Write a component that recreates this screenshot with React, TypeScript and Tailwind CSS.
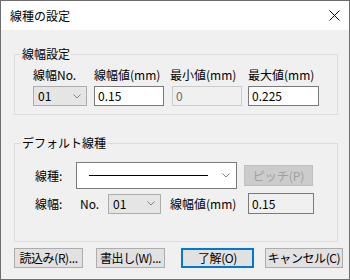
import React from "react";

const Chevron = () => (
  <svg width="8" height="5" viewBox="0 0 8 5" className="shrink-0">
    <polyline points="0.5,0.5 4,4 7.5,0.5" fill="none" stroke="#858585" strokeWidth="1" />
  </svg>
);

function NoCombo({ value, w }: { value: string; w: string }) {
  return (
    <div className={`${w} h-[20px] border border-[#adadad] bg-[#e5e5e5] flex items-center justify-between pl-[4px] pr-[5px]`}>
      <span>{value}</span>
      <Chevron />
    </div>
  );
}

function TextBox({ value, w, disabled }: { value: string; w: string; disabled?: boolean }) {
  return (
    <div
      className={`${w} h-[20px] border flex items-center pl-[3px] ${
        disabled ? "border-[#cccccc] bg-[#f0f0f0] text-[#6d6d6d]" : "border-[#7a7a7a] bg-white"
      }`}
    >
      {value}
    </div>
  );
}

function Btn({ label, w, ml, def }: { label: string; w: string; ml: string; def?: boolean }) {
  return (
    <div
      className={`${w} ${ml} h-[20px] flex items-center justify-center whitespace-nowrap tracking-[-0.4px] bg-[#e1e1e1] ${
        def ? "border-2 border-[#0078d7]" : "border border-[#adadad]"
      }`}
    >
      {label}
    </div>
  );
}

function Column({ label, ml, labelMl, children }: { label: string; ml: string; labelMl?: string; children: React.ReactNode }) {
  return (
    <div className={`flex flex-col ${ml}`}>
      <div className={`h-[14px] leading-[14px] whitespace-nowrap ${labelMl ?? ""}`}>{label}</div>
      <div className="mt-[4px]">{children}</div>
    </div>
  );
}

export default function App() {
  return (
    <div className="w-[350px] h-[280px] border border-[#6d6d6d] bg-[#f0f0f0] flex flex-col text-[12px] leading-none text-black font-['Noto_Sans_CJK_JP','Noto_Sans',sans-serif]">
      {/* タイトルバー */}
      <div className="h-[29px] bg-white flex items-center justify-between pl-[9px] pr-[9px]">
        <span>線種の設定</span>
        <svg width="11" height="11" viewBox="0 0 11 11">
          <path d="M0.5 0.5 L10.5 10.5 M10.5 0.5 L0.5 10.5" stroke="#000" strokeWidth="1" />
        </svg>
      </div>

      <div className="flex-1 flex flex-col pl-[13px] pt-[24px]">
        {/* 線幅設定 */}
        <div className="relative w-[324px] h-[61px] border border-[#dcdcdc]">
          <span className="absolute left-[6px] top-[-8px] px-[1px] bg-[#f0f0f0] leading-[14px]">線幅設定</span>
          <div className="flex pl-[18px] pt-[13px]">
            <Column label="線幅No." ml="">
              <NoCombo value="01" w="w-[54px]" />
            </Column>
            <Column label="線幅値(mm)" ml="ml-[7px]">
              <TextBox value="0.15" w="w-[70px]" />
            </Column>
            <Column label="最小値(mm)" ml="ml-[8px]" labelMl="-ml-[2px]">
              <TextBox value="0" w="w-[70px]" disabled />
            </Column>
            <Column label="最大値(mm)" ml="ml-[6px]">
              <TextBox value="0.225" w="w-[71px]" />
            </Column>
          </div>
        </div>

        {/* デフォルト線種 */}
        <div className="relative mt-[28px] w-[324px] h-[99px] border border-[#dcdcdc]">
          <span className="absolute left-[6px] top-[-8px] px-[1px] bg-[#f0f0f0] leading-[14px]">デフォルト線種</span>
          <div className="flex flex-col pl-[20px] pt-[18px]">
            <div className="flex items-center">
              <span className="w-[41px]">線種:</span>
              <div className="w-[161px] h-[27px] border border-[#7a7a7a] bg-white flex items-center justify-between pl-[12px] pr-[6px]">
                <div className="w-[119px] h-[1px] bg-black" />
                <Chevron />
              </div>
              <div className="ml-[7px] w-[69px] h-[21px] border border-[#bfbfbf] bg-[#cccccc] text-[#a0a0a0] flex items-center justify-center">
                ピッチ(P)
              </div>
            </div>
            <div className="flex items-center mt-[4px]">
              <span className="w-[45px]">線幅:</span>
              <span className="w-[28px]">No.</span>
              <NoCombo value="01" w="w-[53px]" />
              <span className="ml-[9px] w-[78px]">線幅値(mm)</span>
              <div className="h-[21px] w-[66px] border border-[#7a7a7a] bg-[#f0f0f0] flex items-center pl-[3px]">0.15</div>
            </div>
          </div>
        </div>

        {/* ボタン */}
        <div className="flex mt-[6px]">
          <Btn label="読込み(R)..." w="w-[69px]" ml="" />
          <Btn label="書出し(W)..." w="w-[69px]" ml="ml-[13px]" />
          <Btn label="了解(O)" w="w-[73px]" ml="ml-[16px]" def />
          <Btn label="キャンセル(C)" w="w-[78px]" ml="ml-[11px]" />
        </div>
      </div>
    </div>
  );
}
